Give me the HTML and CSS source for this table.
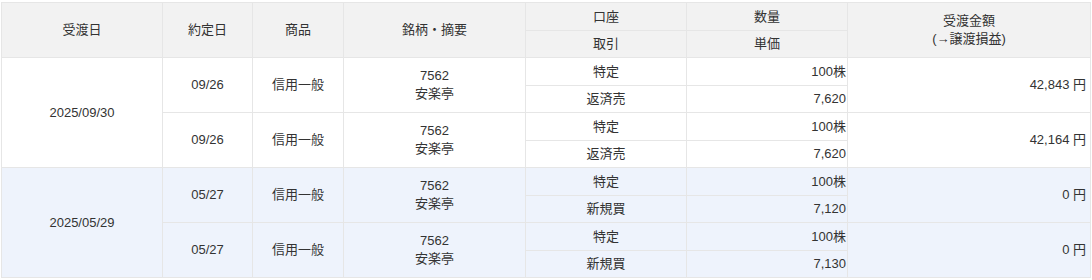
FILE: index.html
```html
<!DOCTYPE html>
<html lang="ja">
<head>
<meta charset="utf-8">
<link rel="stylesheet" href="styles.css">
</head>
<body>
<table class="trades">
  <colgroup>
    <col class="c-date">
    <col class="c-trade">
    <col class="c-prod">
    <col class="c-name">
    <col class="c-acct">
    <col class="c-qty">
    <col class="c-amt">
  </colgroup>
  <thead>
    <tr class="r-a">
      <th rowspan="2">受渡日</th>
      <th rowspan="2">約定日</th>
      <th rowspan="2">商品</th>
      <th rowspan="2">銘柄・摘要</th>
      <th>口座</th>
      <th>数量</th>
      <th rowspan="2">受渡金額<br>(→譲渡損益)</th>
    </tr>
    <tr class="r-b">
      <th>取引</th>
      <th>単価</th>
    </tr>
  </thead>
  <tbody class="grp">
    <tr class="r-a">
      <td rowspan="4">2025/09/30</td>
      <td rowspan="2">09/26</td>
      <td rowspan="2">信用一般</td>
      <td rowspan="2">7562<br>安楽亭</td>
      <td>特定</td>
      <td class="num">100株</td>
      <td rowspan="2" class="amt">42,843 円</td>
    </tr>
    <tr class="r-b">
      <td>返済売</td>
      <td class="num">7,620</td>
    </tr>
    <tr class="r-a">
      <td rowspan="2">09/26</td>
      <td rowspan="2">信用一般</td>
      <td rowspan="2">7562<br>安楽亭</td>
      <td>特定</td>
      <td class="num">100株</td>
      <td rowspan="2" class="amt">42,164 円</td>
    </tr>
    <tr class="r-b">
      <td>返済売</td>
      <td class="num">7,620</td>
    </tr>
  </tbody>
  <tbody class="grp alt">
    <tr class="r-a">
      <td rowspan="4">2025/05/29</td>
      <td rowspan="2">05/27</td>
      <td rowspan="2">信用一般</td>
      <td rowspan="2">7562<br>安楽亭</td>
      <td>特定</td>
      <td class="num">100株</td>
      <td rowspan="2" class="amt">0 円</td>
    </tr>
    <tr class="r-b">
      <td>新規買</td>
      <td class="num">7,120</td>
    </tr>
    <tr class="r-a">
      <td rowspan="2">05/27</td>
      <td rowspan="2">信用一般</td>
      <td rowspan="2">7562<br>安楽亭</td>
      <td>特定</td>
      <td class="num">100株</td>
      <td rowspan="2" class="amt">0 円</td>
    </tr>
    <tr class="r-b">
      <td>新規買</td>
      <td class="num">7,130</td>
    </tr>
  </tbody>
</table>
</body>
</html>
```

FILE: styles.css
```css
html, body {
  margin: 0;
  padding: 0;
  background: #ffffff;
}

body {
  padding: 2px 0 0 1px;
  font-family: "Liberation Sans", "Noto Sans CJK JP", sans-serif;
  font-size: 13px;
  color: #333333;
}

.trades {
  border-collapse: collapse;
  table-layout: fixed;
  width: 1089px;
}

.c-date { width: 161px; }
.c-trade { width: 90px; }
.c-prod { width: 91px; }
.c-name { width: 182px; }
.c-acct { width: 161px; }
.c-qty { width: 161px; }
.c-amt { width: 243px; }

.trades th,
.trades td {
  border: 1px solid #e6e6e6;
  padding: 0 2px;
  text-align: center;
  vertical-align: middle;
  line-height: 18px;
  font-weight: normal;
}

.trades th {
  background: #f2f2f2;
}

.trades tr.r-a { height: 28px; }
.trades tr.r-b { height: 27px; }

.trades td.num {
  text-align: right;
  padding-right: 1px;
}

.trades td.amt {
  text-align: right;
  padding-right: 4px;
}

.grp.alt td {
  background: #eef3fc;
}
```
